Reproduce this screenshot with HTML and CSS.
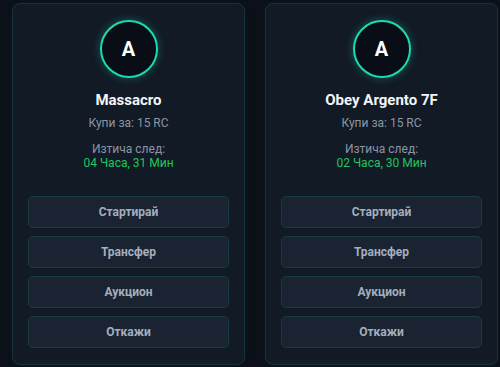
FILE: index.html
```html
<!DOCTYPE html>
<html lang="bg">
<head>
  <meta charset="UTF-8">
  <meta name="viewport" content="width=device-width, initial-scale=1.0">
  <title>Договори</title>
  <link rel="stylesheet" href="styles.css">
</head>
<body>
  <div class="contracts">
    <div class="contract-card">
      <div class="avatar">A</div>
      <h2 class="player-name">Massacro</h2>
      <div class="price">Купи за: 15 RC</div>
      <div class="expires">
        <div class="expires-label">Изтича след:</div>
        <div class="expires-value">04 Часа, 31 Мин</div>
      </div>
      <div class="actions">
        <button type="button">Стартирай</button>
        <button type="button">Трансфер</button>
        <button type="button">Аукцион</button>
        <button type="button">Откажи</button>
      </div>
    </div>

    <div class="contract-card">
      <div class="avatar">A</div>
      <h2 class="player-name">Obey Argento 7F</h2>
      <div class="price">Купи за: 15 RC</div>
      <div class="expires">
        <div class="expires-label">Изтича след:</div>
        <div class="expires-value">02 Часа, 30 Мин</div>
      </div>
      <div class="actions">
        <button type="button">Стартирай</button>
        <button type="button">Трансфер</button>
        <button type="button">Аукцион</button>
        <button type="button">Откажи</button>
      </div>
    </div>
  </div>
</body>
</html>
```

FILE: styles.css
```css
body {
  font-family: Roboto, 'Noto Sans', sans-serif;
  margin: 0;
  padding: 0;
  background-color: #0c1018;
  height: 367px;
  overflow: hidden;
}

.contracts {
  display: grid;
  grid-template-columns: 1fr 1fr;
  gap: 20px;
  padding: 3px 2px 0 12px;
}

.contract-card {
  background: #121a25;
  border: 1px solid #17333a;
  border-radius: 8px;
  box-shadow: 0 0 6px rgba(20, 190, 160, 0.06);
  padding: 16px 15px 16px;
  display: flex;
  flex-direction: column;
  align-items: center;
  text-align: center;
}

.avatar {
  width: 54px;
  height: 54px;
  border: 2px solid #1dd9b0;
  border-radius: 50%;
  background: #090d15;
  box-shadow: 0 0 8px rgba(29, 217, 176, 0.35);
  color: #fff;
  font-size: 20px;
  font-weight: 700;
  display: flex;
  align-items: center;
  justify-content: center;
}

.player-name {
  font-size: 15px;
  line-height: 20px;
  font-weight: 700;
  color: #f3f5f8;
  margin: 12px 0 0;
}

.price {
  font-size: 12px;
  line-height: 16px;
  color: #8b95a5;
  margin-top: 5px;
}

.expires {
  margin-top: 11px;
  font-size: 12px;
  line-height: 14px;
}

.expires-label {
  color: #8b95a5;
}

.expires-value {
  color: #22c55e;
}

.actions {
  display: flex;
  flex-direction: column;
  gap: 8px;
  width: 100%;
  margin-top: 26px;
}

.actions button {
  height: 32px;
  background: #1a2331;
  border: 1px solid #183a40;
  border-radius: 5px;
  color: #a4aebd;
  font-family: inherit;
  font-size: 12px;
  font-weight: 700;
  cursor: pointer;
}

.actions button:hover {
  background: #202b3b;
}
```
